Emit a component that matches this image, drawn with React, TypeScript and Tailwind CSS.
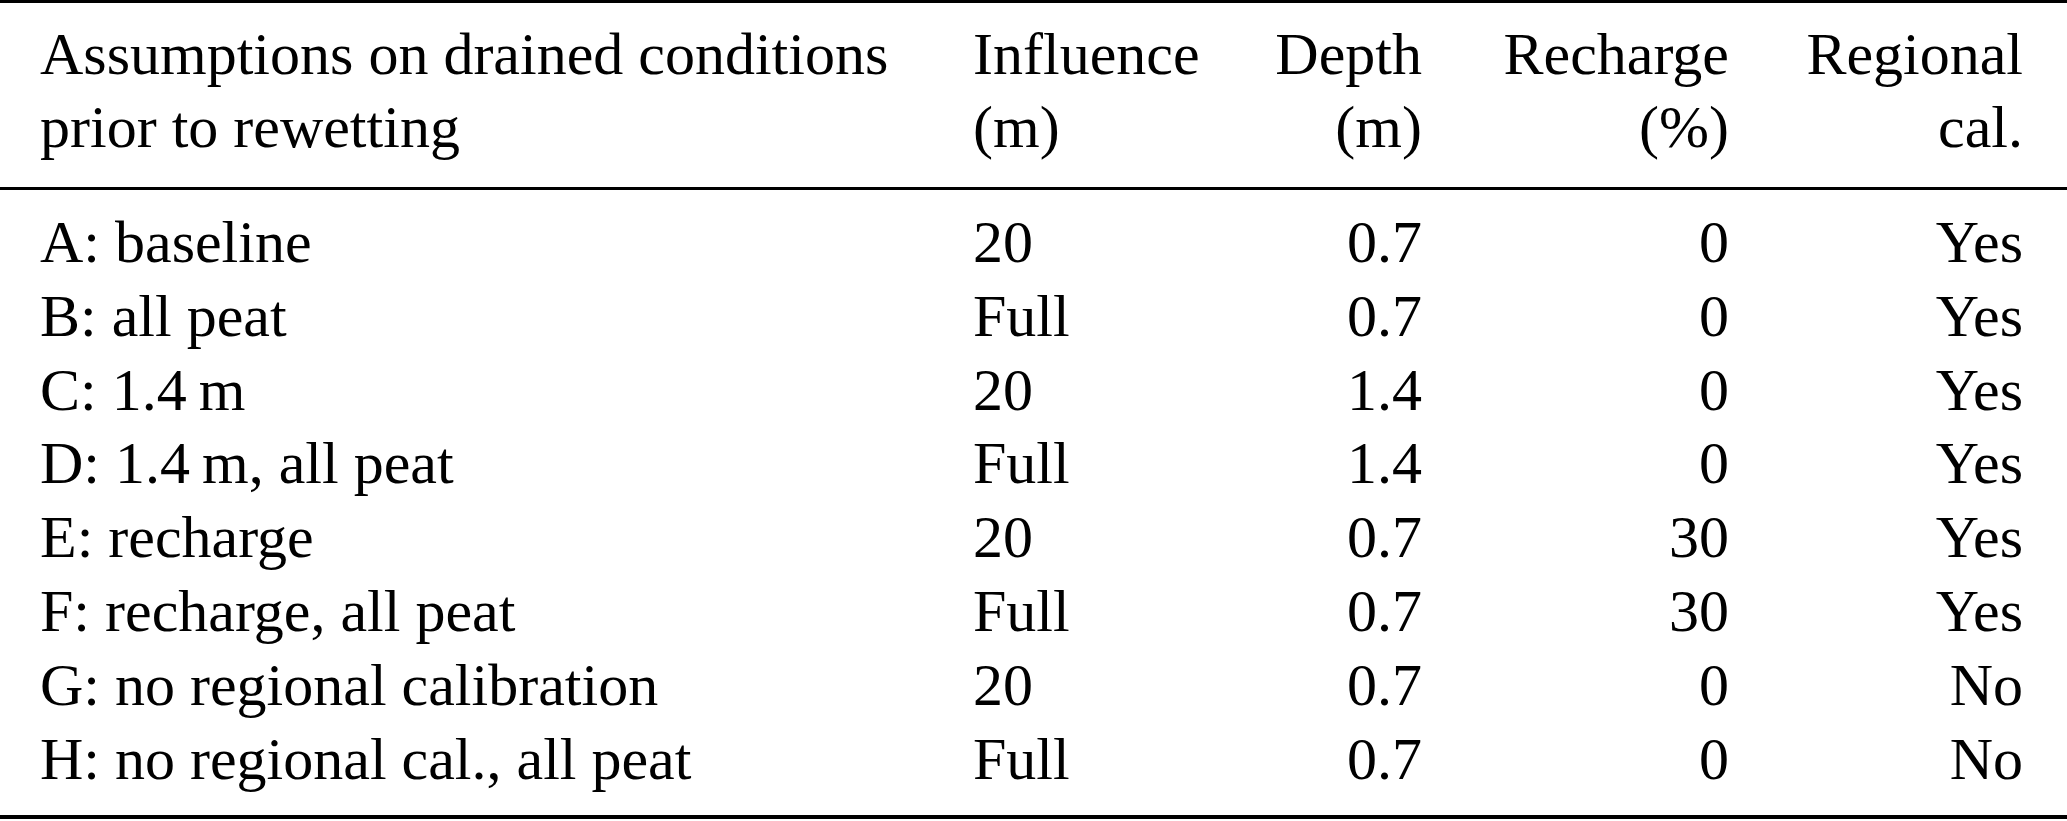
const rows = [
  { label: 'A: baseline', influence: '20', depth: '0.7', recharge: '0', cal: 'Yes' },
  { label: 'B: all peat', influence: 'Full', depth: '0.7', recharge: '0', cal: 'Yes' },
  { label: 'C: 1.4\u2009m', influence: '20', depth: '1.4', recharge: '0', cal: 'Yes' },
  { label: 'D: 1.4\u2009m, all peat', influence: 'Full', depth: '1.4', recharge: '0', cal: 'Yes' },
  { label: 'E: recharge', influence: '20', depth: '0.7', recharge: '30', cal: 'Yes' },
  { label: 'F: recharge, all peat', influence: 'Full', depth: '0.7', recharge: '30', cal: 'Yes' },
  { label: 'G: no regional calibration', influence: '20', depth: '0.7', recharge: '0', cal: 'No' },
  { label: 'H: no regional cal., all peat', influence: 'Full', depth: '0.7', recharge: '0', cal: 'No' },
]

// column template shared by header and body
const cols = 'grid grid-cols-[933px_300px_149px_307px_294px] pl-[40px]'

export default function App() {
  return (
    <div className="w-[2067px] h-[821px] bg-white text-black text-[60px] font-['Liberation_Serif','Times_New_Roman',serif]">
      {/* Header */}
      <div className="border-t-[3px] border-b-[3px] border-black pt-[15px] pb-[23px] leading-[73px]">
        <div className={cols}>
          <div>
            Assumptions on drained conditions
            <br />
            prior to rewetting
          </div>
          <div>
            Influence
            <br />
            (m)
          </div>
          <div className="text-right">
            Depth
            <br />
            (m)
          </div>
          <div className="text-right">
            Recharge
            <br />
            (%)
          </div>
          <div className="text-right">
            Regional
            <br />
            cal.
          </div>
        </div>
      </div>

      {/* Body */}
      <div className="border-b-[4px] border-black pt-[16px] pb-[19px] leading-[73.8px]">
        {rows.map((r) => (
          <div key={r.label} className={cols}>
            <div className="whitespace-nowrap">{r.label}</div>
            <div>{r.influence}</div>
            <div className="text-right">{r.depth}</div>
            <div className="text-right">{r.recharge}</div>
            <div className="text-right">{r.cal}</div>
          </div>
        ))}
      </div>
    </div>
  )
}
